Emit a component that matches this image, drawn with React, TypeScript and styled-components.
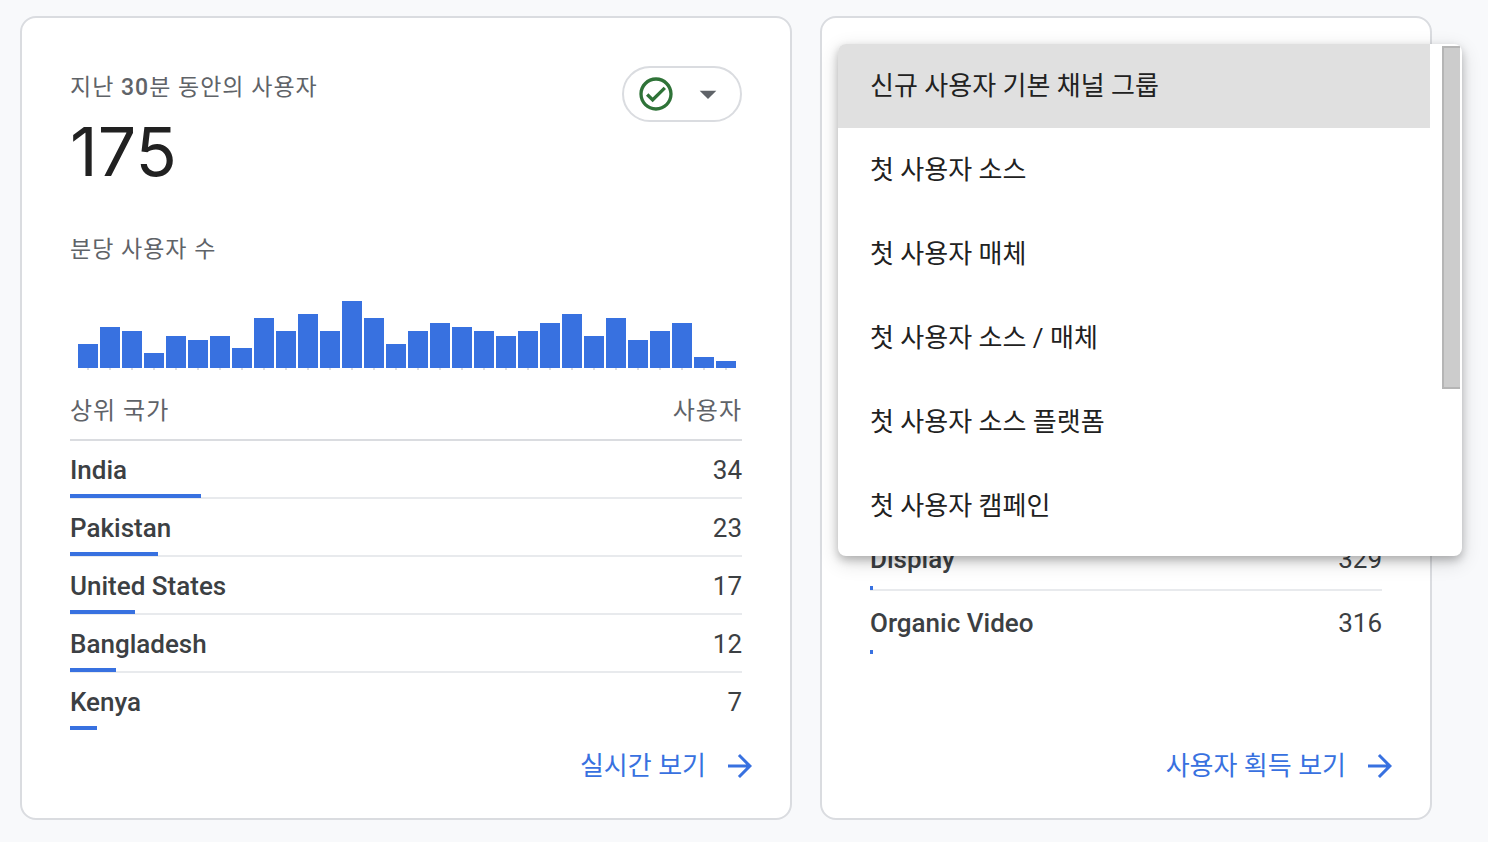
import React from "react";
import styled, { createGlobalStyle } from "styled-components";

const GlobalStyle = createGlobalStyle`
  *, *::before, *::after { box-sizing: border-box; }
  body {
    margin: 0;
    background: #f8f9fb;
    color: #212121;
    font-family: Roboto, "Noto Sans CJK KR", sans-serif;
  }
`;

const blue = "#3871e0";
const outline = "#dadce0";

const Page = styled.main`
  display: grid;
  grid-template-columns: minmax(0, 772fr) minmax(0, 612fr);
  gap: 28px;
  padding: 16px 56px 22px 20px;
`;

const Card = styled.section`
  position: relative;
  display: flex;
  flex-direction: column;
  padding: 48px 48px 32px;
  background: #fff;
  border: 2px solid ${outline};
  border-radius: 16px;
`;

const CardHeader = styled.header`
  display: flex;
  justify-content: space-between;
  align-items: flex-start;
`;

const Label = styled.h2`
  margin: 0;
  font-size: 23px;
  line-height: 44px;
  font-weight: 400;
  letter-spacing: 1px;
  color: #5f6368;
`;

const Strong = styled.span`
  font-weight: 500;
`;

const Total = styled.p`
  margin: 0 0 36px;
  font-family: Inter, Roboto, sans-serif;
  font-size: 68px;
  line-height: 82px;
`;

const StatusButton = styled.button`
  display: flex;
  align-items: center;
  gap: 12px;
  height: 56px;
  padding: 0 12px;
  border: 2px solid ${outline};
  border-radius: 28px;
  background: #fff;
  cursor: pointer;
`;

const Chart = styled.div`
  display: flex;
  align-items: flex-end;
  gap: 2px;
  height: 72px;
  margin-top: 26px;
  padding: 0 6px 0 8px;
`;

const Minute = styled.div`
  flex: 1;
  display: flex;
  flex-direction: column;
  align-items: center;

  &::after {
    content: "";
    width: 2px;
    height: 2px;
    background: ${outline};
  }
`;

const MinuteBar = styled.div`
  width: 100%;
  background: ${blue};
`;

const Table = styled.table`
  width: 100%;
  border-collapse: collapse;
`;

const HeadCell = styled.th<{ $end?: boolean }>`
  height: 70px;
  padding: 8px 0 0;
  border-bottom: 2px solid ${outline};
  font-size: 24px;
  font-weight: 400;
  letter-spacing: 1px;
  color: #5f6368;
  text-align: ${(p) => (p.$end ? "right" : "left")};
`;

const Row = styled.tr<{ $height: number }>`
  position: relative;
  height: ${(p) => p.$height}px;
  border-bottom: 2px solid #e8eaed;

  &:last-child {
    border-bottom-color: transparent;
  }
`;

const NameCell = styled.th`
  padding: 2px 0 0;
  font-size: 26px;
  line-height: 32px;
  font-weight: 500;
  color: #3c4043;
  text-align: left;
`;

const ValueCell = styled.td`
  padding: 2px 0 0;
  font-size: 26px;
  line-height: 32px;
  color: #3c4043;
  text-align: right;
`;

const ShareBar = styled.div`
  position: absolute;
  left: 0;
  bottom: -2px;
  min-width: 3px;
  height: 4px;
  background: ${blue};
`;

const ChannelArea = styled.div`
  margin-top: auto;
  margin-bottom: 76px;
`;

const CardFooter = styled.footer`
  display: flex;
  justify-content: flex-end;
  margin-top: 15px;
  margin-right: -16px;
`;

const CardLink = styled.a`
  display: flex;
  align-items: center;
  gap: 16px;
  font-size: 26px;
  line-height: 40px;
  color: ${blue};
  text-decoration: none;
`;

const Menu = styled.div`
  position: absolute;
  z-index: 1;
  top: 26px;
  left: 16px;
  right: -32px;
  padding: 0 32px 8px 0;
  overflow: hidden;
  background: #fff;
  border-radius: 8px;
  box-shadow:
    0 4px 8px rgba(0, 0, 0, 0.22),
    0 6px 20px rgba(0, 0, 0, 0.16);
`;

const MenuItem = styled.button<{ $selected: boolean }>`
  display: block;
  width: 100%;
  height: 84px;
  padding: 0 32px;
  border: 0;
  background: ${(p) => (p.$selected ? "#e0e0e0" : "transparent")};
  font: inherit;
  font-size: 26px;
  line-height: 40px;
  color: #212121;
  text-align: left;
  cursor: pointer;
`;

const ScrollThumb = styled.div`
  position: absolute;
  top: 2px;
  right: 2px;
  width: 18px;
  height: 67%;
  background: #ccc;
  border: 2px solid #b5b5b5;
  border-right: 0;
`;

const minutes = [
  24, 41, 37, 15, 32, 28, 32, 20, 50, 37, 54, 37, 67, 50, 24, 37, 45, 41, 37,
  32, 37, 45, 54, 32, 50, 28, 37, 45, 11, 7,
];

const countries = [
  { name: "India", value: 34 },
  { name: "Pakistan", value: 23 },
  { name: "United States", value: 17 },
  { name: "Bangladesh", value: 12 },
  { name: "Kenya", value: 7 },
];
const totalUsers = 175;

const channels = [
  { name: "Display", value: 329 },
  { name: "Organic Video", value: 316 },
];
const totalNewUsers = 66000;

const dimensions = [
  "신규 사용자 기본 채널 그룹",
  "첫 사용자 소스",
  "첫 사용자 매체",
  "첫 사용자 소스 / 매체",
  "첫 사용자 소스 플랫폼",
  "첫 사용자 캠페인",
];

type Entry = { name: string; value: number };

function DataRow({ entry, total, height }: { entry: Entry; total: number; height: number }) {
  return (
    <Row $height={height}>
      <NameCell scope="row">
        {entry.name}
        <ShareBar style={{ width: `${(entry.value / total) * 100}%` }} />
      </NameCell>
      <ValueCell>{entry.value}</ValueCell>
    </Row>
  );
}

function FooterLink({ children }: { children: React.ReactNode }) {
  return (
    <CardFooter>
      <CardLink href="#">
        {children}
        <svg width="36" height="36" viewBox="0 0 24 24" fill="currentColor" aria-hidden="true">
          <path d="M12 4l-1.41 1.41L16.17 11H4v2h12.17l-5.58 5.59L12 20l8-8z" />
        </svg>
      </CardLink>
    </CardFooter>
  );
}

export default function App() {
  return (
    <>
      <GlobalStyle />
      <Page>
        <Card>
          <CardHeader>
            <div>
              <Label>
                지난 <Strong>30</Strong>분 동안의 사용자
              </Label>
              <Total>{totalUsers}</Total>
            </div>
            <StatusButton type="button" aria-label="데이터 상태">
              <svg width="40" height="40" viewBox="0 0 24 24" fill="#2f7338" aria-hidden="true">
                <path d="M12 2C6.48 2 2 6.48 2 12s4.48 10 10 10 10-4.48 10-10S17.52 2 12 2zm0 18c-4.41 0-8-3.59-8-8s3.59-8 8-8 8 3.59 8 8-3.59 8-8 8zm4.59-12.42L10 14.17l-2.59-2.58L6 13l4 4 8-8z" />
              </svg>
              <svg width="40" height="40" viewBox="0 0 24 24" fill="#5f6368" aria-hidden="true">
                <path d="M7 10l5 5 5-5z" />
              </svg>
            </StatusButton>
          </CardHeader>
          <Label as="h3">분당 사용자 수</Label>
          <Chart role="img" aria-label="분당 사용자 수">
            {minutes.map((height, i) => (
              <Minute key={i}>
                <MinuteBar style={{ height }} />
              </Minute>
            ))}
          </Chart>
          <Table>
            <thead>
              <tr>
                <HeadCell scope="col">상위 국가</HeadCell>
                <HeadCell scope="col" $end>
                  사용자
                </HeadCell>
              </tr>
            </thead>
            <tbody>
              {countries.map((c) => (
                <DataRow key={c.name} entry={c} total={totalUsers} height={58} />
              ))}
            </tbody>
          </Table>
          <FooterLink>실시간 보기</FooterLink>
        </Card>

        <Card>
          <Menu role="listbox" aria-label="측정기준">
            {dimensions.map((d, i) => (
              <MenuItem key={d} type="button" role="option" aria-selected={i === 0} $selected={i === 0}>
                {d}
              </MenuItem>
            ))}
            <ScrollThumb />
          </Menu>
          <ChannelArea>
            <Table>
              <tbody>
                {channels.map((c) => (
                  <DataRow key={c.name} entry={c} total={totalNewUsers} height={64} />
                ))}
              </tbody>
            </Table>
          </ChannelArea>
          <FooterLink>사용자 획득 보기</FooterLink>
        </Card>
      </Page>
    </>
  );
}
